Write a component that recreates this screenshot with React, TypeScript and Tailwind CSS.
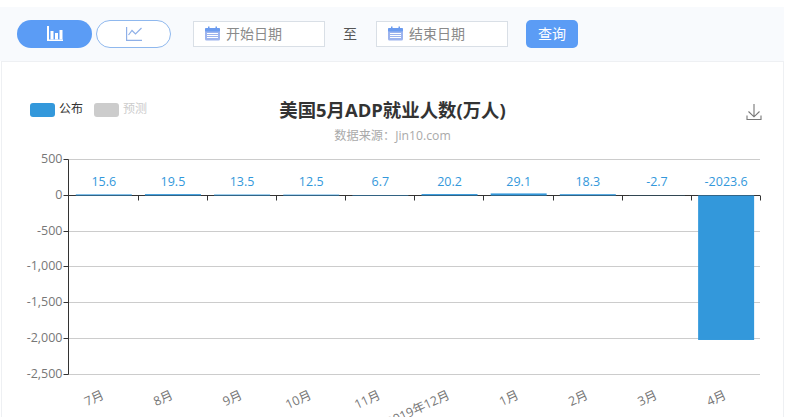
const fontStack = 'font-["Open_Sans","Noto_Sans_CJK_SC",sans-serif]';

const bars = [
  { label: '7月', value: 15.6 },
  { label: '8月', value: 19.5 },
  { label: '9月', value: 13.5 },
  { label: '10月', value: 12.5 },
  { label: '11月', value: 6.7 },
  { label: '2019年12月', value: 20.2 },
  { label: '1月', value: 29.1 },
  { label: '2月', value: 18.3 },
  { label: '3月', value: -2.7 },
  { label: '4月', value: -2023.6 },
];

const ticks = [500, 0, -500, -1000, -1500, -2000, -2500];

const axisLeft = 66.5;
const axisRight = 758;
const top = 9.5;
const zero = 45.5;
const perUnit = 35.7 / 500;
const step = (axisRight - axisLeft) / 10;

function CalendarIcon() {
  return (
    <svg width="15" height="15" viewBox="0 0 15 15" className="shrink-0">
      <rect x="0" y="2" width="15" height="12.5" rx="1.5" fill="#9db4ee" />
      <rect x="0" y="2" width="15" height="3.5" rx="1" fill="#6b9bef" />
      <rect x="3" y="0.5" width="1.5" height="3" fill="#6b9bef" />
      <rect x="10.5" y="0.5" width="1.5" height="3" fill="#6b9bef" />
      <path d="M2 7.5h11M2 9.5h11M2 11.5h11" stroke="#fff" strokeWidth="1" />
    </svg>
  );
}

function BarIcon() {
  return (
    <svg width="16" height="15" viewBox="0 0 16 15" fill="#fff">
      <rect x="0" y="0" width="2" height="15" />
      <rect x="3.5" y="5" width="3" height="8.5" />
      <rect x="8" y="7" width="3" height="6.5" />
      <rect x="12.5" y="4" width="3" height="9.5" />
      <rect x="0" y="13.5" width="16" height="1.5" />
    </svg>
  );
}

function TrendIcon() {
  return (
    <svg width="16" height="14" viewBox="0 0 16 14" fill="none" stroke="#8fb0e8" strokeWidth="1.2">
      <path d="M0.6 0v13.4H16" />
      <path d="M2.5 8l3.5-4.5 3.5 3.5L15.5 1" />
    </svg>
  );
}

function SaveIcon() {
  return (
    <svg width="16" height="16" viewBox="0 0 16 16" fill="none" stroke="#777777" strokeWidth="1.1">
      <path d="M8 0v12.5M2.5 7.5L8 12.8l5.5-5.3" />
      <path d="M1 11.5v4h14v-4" />
    </svg>
  );
}

function DateInput({ placeholder }: { placeholder: string }) {
  return (
    <div className="flex h-[26px] w-[132px] items-center gap-[6px] border border-[#d9dfe6] bg-white pl-[11px]">
      <CalendarIcon />
      <span className="text-[14px] leading-none text-[#8a8a8a]">{placeholder}</span>
    </div>
  );
}

function Chart() {
  return (
    <svg width="782" height="267" viewBox="0 0 782 267" className="block">
      {ticks.map((tick) => {
        const y = Math.floor(zero - tick * perUnit) + 0.5;
        return (
          <g key={tick}>
            {tick !== 0 && <line x1={axisLeft} x2={axisRight} y1={y} y2={y} stroke="#cccccc" />}
            <line x1={axisLeft - 5} x2={axisLeft} y1={y} y2={y} stroke="#333333" />
            <text x={axisLeft - 6} y={y + 3.5} textAnchor="end" fontSize="12.5" fill="#777777">
              {tick.toLocaleString('en-US')}
            </text>
          </g>
        );
      })}
      <line x1={axisLeft} x2={axisLeft} y1={top} y2={224.5} stroke="#333333" />
      <line x1={axisLeft} x2={axisRight} y1={zero} y2={zero} stroke="#333333" />
      {bars.map((bar, i) => {
        const cx = axisLeft + step * (i + 0.5) + 0.7;
        const h = Math.abs(bar.value) * perUnit;
        const y = bar.value >= 0 ? zero - h : zero;
        const tickX = Math.round(axisLeft + step * (i + 1)) + 0.5;
        return (
          <g key={bar.label}>
            <line x1={tickX} x2={tickX} y1={zero} y2={zero + 5} stroke="#333333" />
            <rect x={cx - 28} y={y} width="56" height={h} fill="#3398db" />
            <text x={cx} y="36" textAnchor="middle" fontSize="12.5" fill="#3398db">
              {bar.value}
            </text>
            <text
              x={cx + 1}
              y="248"
              textAnchor="end"
              fontSize="12.5"
              fill="#777777"
              transform={`rotate(-25 ${cx + 1} 248)`}
            >
              {bar.label}
            </text>
          </g>
        );
      })}
    </svg>
  );
}

export default function App() {
  return (
    <div className={`h-[417px] w-[787px] overflow-hidden bg-white pt-[7px] ${fontStack}`}>
      <div className="flex h-[54px] w-[784px] items-center bg-[#f8fafd] pb-[1px] pl-[17px]">
        <button className="flex h-7 w-[75px] items-center justify-center rounded-full bg-[#5b9cf5]">
          <BarIcon />
        </button>
        <button className="ml-[4px] flex h-7 w-[75px] items-center justify-center rounded-full border border-[#8fb8ee] bg-white">
          <TrendIcon />
        </button>
        <div className="ml-[22px]">
          <DateInput placeholder="开始日期" />
        </div>
        <span className="ml-[18px] mr-[19px] text-[14px] text-[#555555]">至</span>
        <DateInput placeholder="结束日期" />
        <button className="ml-[18px] flex h-7 w-[52px] items-center justify-center rounded-[5px] bg-[#5b9cf5] text-[14px] text-white">
          查询
        </button>
      </div>
      <div className="ml-[1px] h-[356px] w-[783px] border-x border-t border-[#eef0f3] bg-white">
        <div className="grid h-[88px] grid-cols-[1fr_auto_1fr] pt-[35px]">
          <div className="mt-[6px] flex h-[14px] items-center pl-[28px] text-[12px] leading-none">
            <span className="h-[14px] w-[25px] rounded-[3px] bg-[#3398db]" />
            <span className="ml-[4px] -translate-y-px text-[#333333]">公布</span>
            <span className="ml-[11px] h-[14px] w-[25px] rounded-[3px] bg-[#cccccc]" />
            <span className="ml-[4px] -translate-y-px text-[#cccccc]">预测</span>
          </div>
          <div className="flex flex-col items-center">
            <div className="text-[18.4px] font-bold leading-[26px] text-[#333333]">美国5月ADP就业人数(万人)</div>
            <div className="mt-[6px] text-[12.2px] leading-[14px] text-[#aaaaaa]">数据来源：Jin10.com</div>
          </div>
          <div className="flex justify-end pr-[21px] pt-[7px]">
            <SaveIcon />
          </div>
        </div>
        <Chart />
      </div>
    </div>
  );
}
